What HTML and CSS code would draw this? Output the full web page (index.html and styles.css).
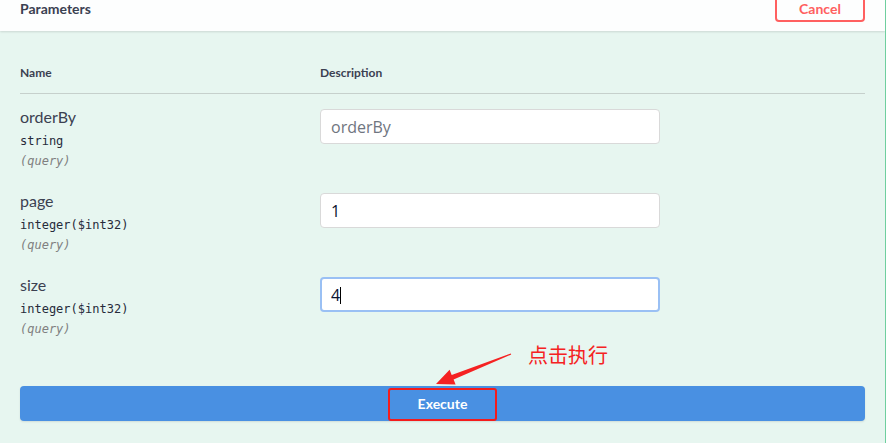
FILE: index.html
```html
<!DOCTYPE html>
<html lang="en">
<head>
<meta charset="utf-8">
<title>Parameters</title>
<link rel="stylesheet" href="styles.css">
</head>
<body>
<div class="opblock">
  <div class="section-header">
    <h4 class="title">Parameters</h4>
    <button class="btn-cancel">Cancel</button>
  </div>
  <div class="params">
    <div class="thead">
      <div class="col-name">Name</div>
      <div class="col-desc">Description</div>
    </div>
    <div class="prow">
      <div class="col-name">
        <div class="pname">orderBy</div>
        <div class="ptype">string</div>
        <div class="pin">(query)</div>
      </div>
      <div class="col-desc">
        <input class="pinput" type="text" placeholder="orderBy">
      </div>
    </div>
    <div class="prow">
      <div class="col-name">
        <div class="pname">page</div>
        <div class="ptype">integer($int32)</div>
        <div class="pin">(query)</div>
      </div>
      <div class="col-desc">
        <input class="pinput" type="text" value="1">
      </div>
    </div>
    <div class="prow">
      <div class="col-name">
        <div class="pname">size</div>
        <div class="ptype">integer($int32)</div>
        <div class="pin">(query)</div>
      </div>
      <div class="col-desc">
        <div class="input-wrap">
          <input class="pinput focused" type="text" value="4">
          <span class="caret"></span>
        </div>
      </div>
    </div>
    <div class="execute-wrap">
      <button class="btn-execute">Execute</button>
      <span class="hl-box"></span>
      <svg class="arrow" width="90" height="45" viewBox="0 0 90 45">
        <polygon points="75.2,9.5 74.8,8.5 15.7,29.9 13.6,24.8 0,39 19.6,39.6 17.6,34.5" fill="#f52222"/>
      </svg>
      <span class="note">点击执行</span>
    </div>
  </div>
</div>
</body>
</html>
```

FILE: styles.css
```css
* { box-sizing: border-box; }
html, body {
  margin: 0;
  padding: 0;
  background: #ffffff;
}
body {
  font-family: Lato, "Open Sans", sans-serif;
  color: #3b4151;
}
.opblock {
  width: 886px;
  height: 443px;
  background: #e7f6f0;
  border-right: 1px solid #6fcf9f;
  overflow: hidden;
}
.section-header {
  height: 31px;
  background: #fdfefe;
  box-shadow: 0 1px 2px rgba(0, 0, 0, 0.12);
  display: flex;
  justify-content: space-between;
  align-items: flex-start;
  padding: 0 20px;
  position: relative;
  overflow: hidden;
}
.title {
  margin: 0;
  font-size: 14px;
  font-weight: 700;
  line-height: 17px;
  color: #3b4151;
}
.btn-cancel {
  margin-top: -9px;
  width: 90px;
  height: 31px;
  border: 2px solid #ff6060;
  border-radius: 4px;
  background: transparent;
  color: #ff6060;
  font-family: Lato, "Open Sans", sans-serif;
  font-size: 14px;
  font-weight: 700;
  padding: 0;
  line-height: 16px;
  display: flex;
  align-items: flex-end;
  justify-content: center;
  padding-bottom: 3px;
}
.params {
  padding: 34px 20px 0 20px;
}
.thead {
  display: flex;
  font-size: 12px;
  font-weight: 700;
  line-height: 16px;
  padding-bottom: 12px;
  border-bottom: 1px solid #c6d0cc;
}
.col-name {
  width: 300px;
  flex: none;
}
.col-desc {
  flex: 1;
}
.prow {
  display: flex;
  height: 84px;
  padding-top: 14px;
}
.pname {
  font-size: 16px;
  line-height: 18px;
  font-weight: 400;
  color: #3b4151;
}
.ptype {
  margin-top: 7px;
  font-family: "DejaVu Sans Mono", monospace;
  font-size: 12px;
  font-weight: 400;
  line-height: 16px;
  color: #262b3a;
}
.pin {
  margin-top: 4px;
  font-family: "DejaVu Sans Mono", monospace;
  font-size: 12px;
  font-style: italic;
  line-height: 16px;
  color: #808080;
}
.input-wrap {
  position: relative;
  width: 340px;
}
.pinput {
  display: block;
  width: 340px;
  height: 35px;
  margin-top: 1px;
  padding: 0 10px;
  border: 1px solid #d9d9d9;
  border-radius: 4px;
  background: #ffffff;
  font-family: "Open Sans", sans-serif;
  font-size: 16px;
  color: #0b1330;
  outline: none;
}
.pinput::placeholder {
  color: #6f7580;
}
.pinput.focused {
  border: 2px solid #9ac0f4;
  padding-left: 9px;
}
.caret {
  position: absolute;
  left: 20px;
  top: 10px;
  width: 1px;
  height: 17px;
  background: #000;
}
.execute-wrap {
  position: relative;
  margin-top: 40px;
}
.btn-execute {
  display: block;
  width: 100%;
  height: 35px;
  border: none;
  border-radius: 4px;
  background: #4990e2;
  box-shadow: 0 1px 2px rgba(0, 0, 0, 0.1);
  color: #ffffff;
  font-family: Lato, "Open Sans", sans-serif;
  font-size: 14px;
  font-weight: 700;
}
.hl-box {
  position: absolute;
  left: 368px;
  top: 2px;
  width: 109px;
  height: 33px;
  border: 2px solid #f41c1c;
  border-radius: 3px;
}
.arrow {
  position: absolute;
  left: 416px;
  top: -41px;
}
.note {
  position: absolute;
  left: 508px;
  top: -44px;
  font-family: "Noto Sans CJK SC", sans-serif;
  font-size: 20px;
  line-height: 26px;
  color: #f52222;
}
```
